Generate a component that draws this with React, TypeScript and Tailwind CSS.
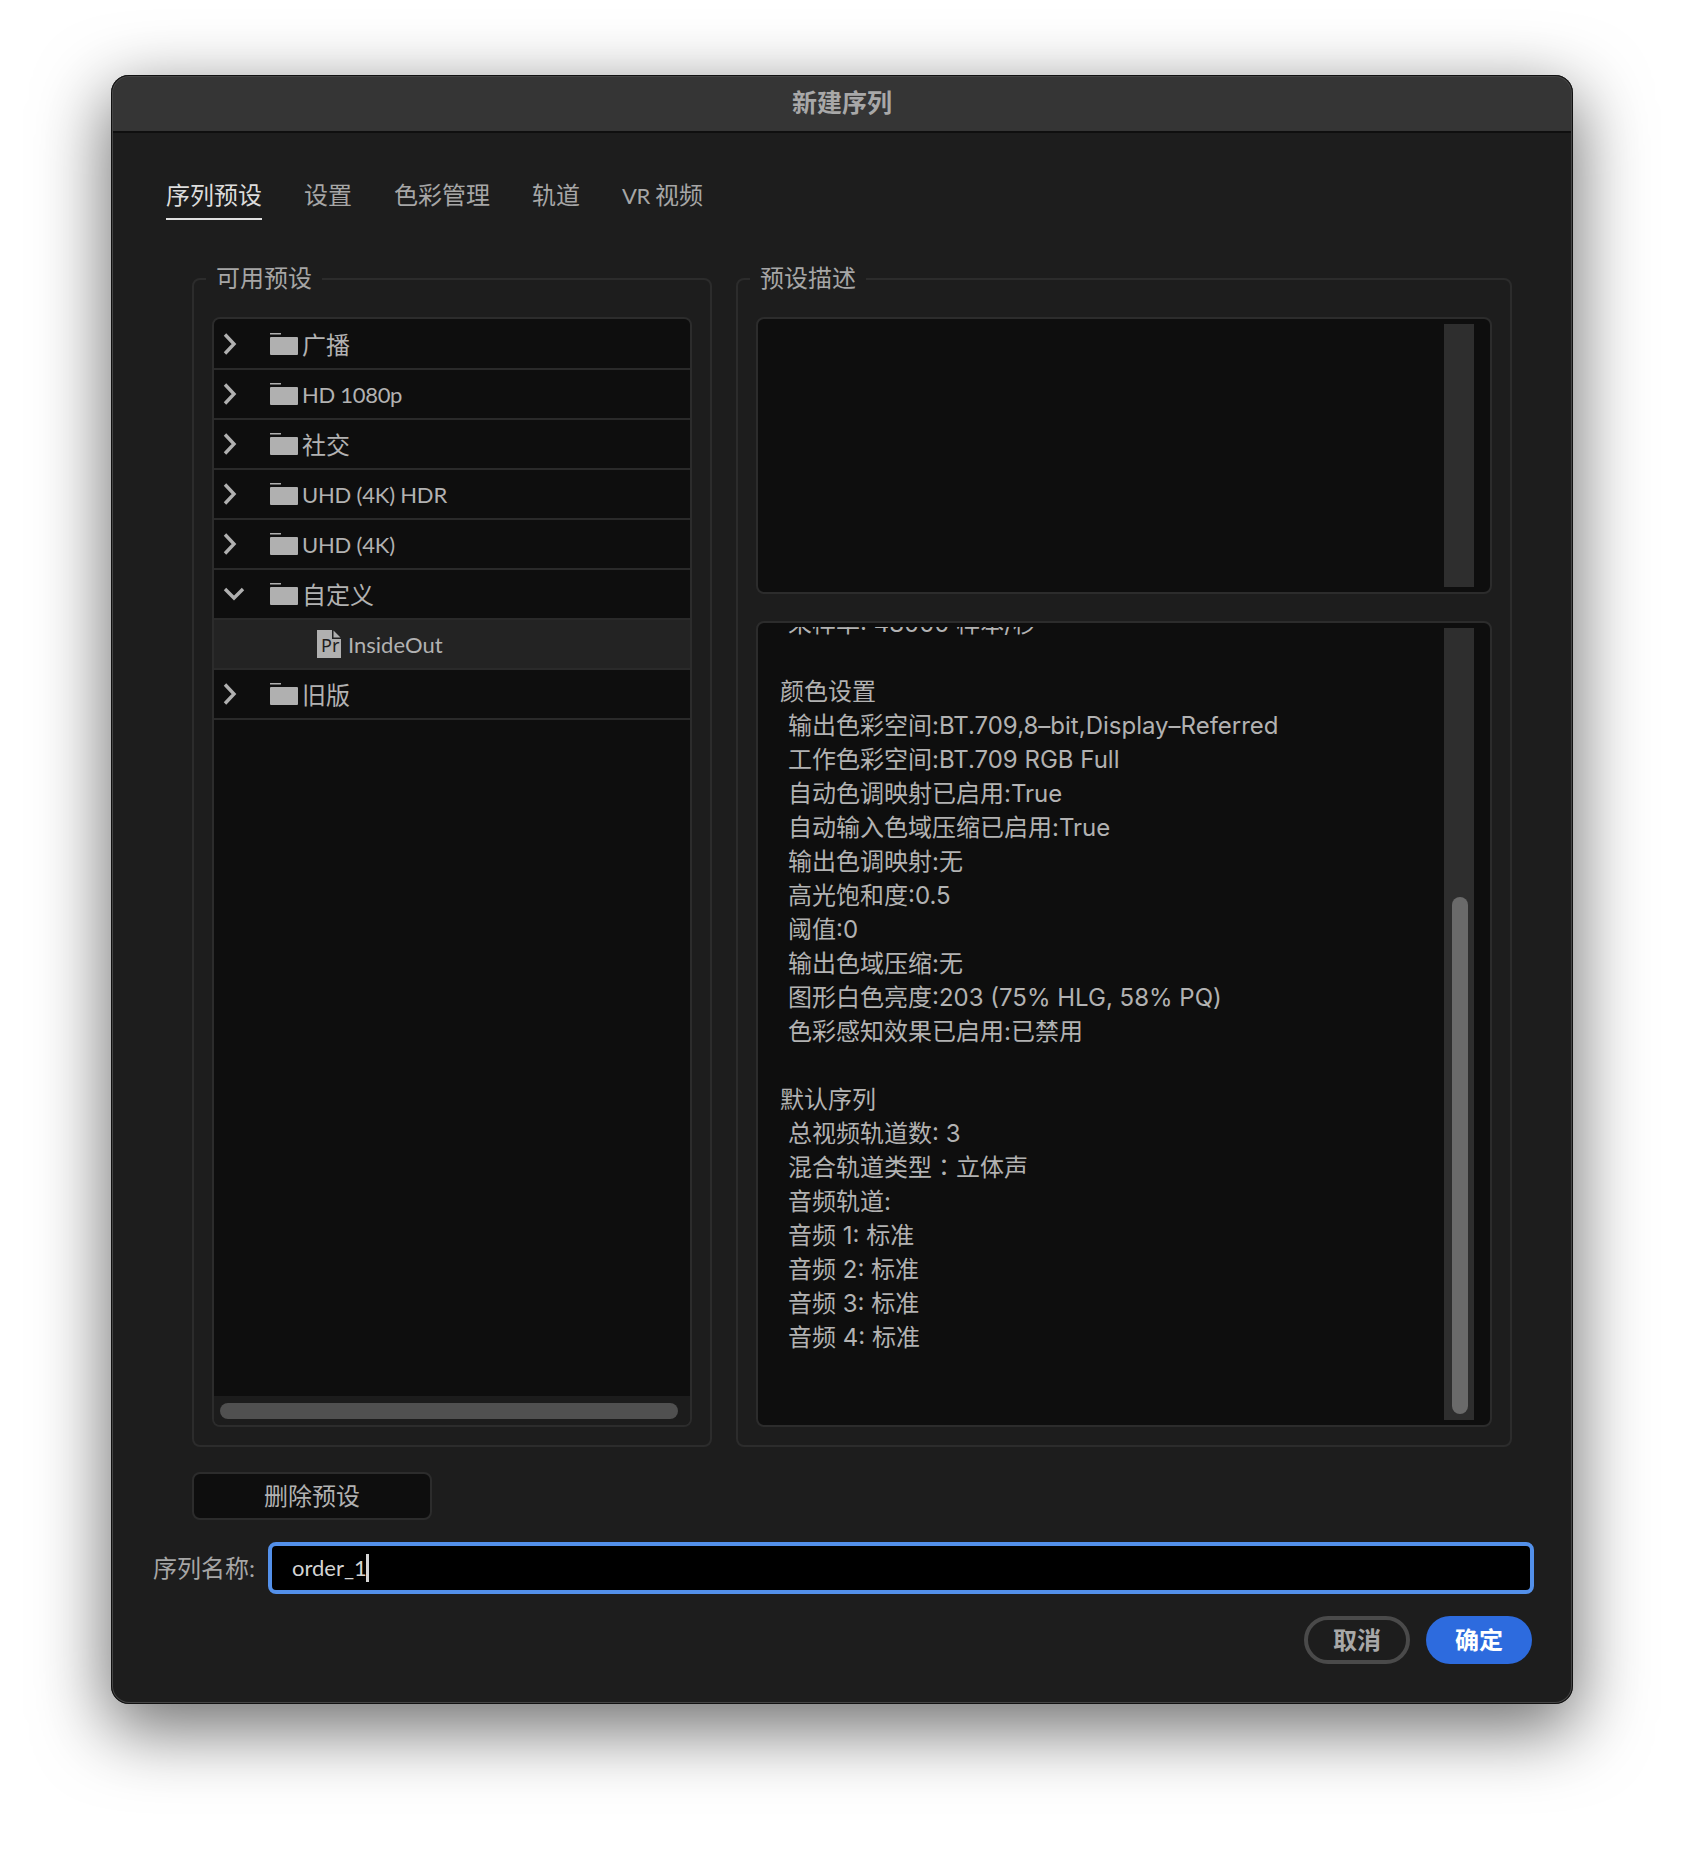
const cjk = "font-['Lato','Noto_Sans_CJK_SC',sans-serif]";
const mixed = "font-['Inter','Noto_Sans_CJK_SC',sans-serif]";

const folders = [
  { name: "广播", size: "text-[24px] mt-[1px]" },
  { name: "HD 1080p", size: "text-[22px] mt-[2px] tracking-[-0.3px]" },
  { name: "社交", size: "text-[24px] mt-[1px]" },
  { name: "UHD (4K) HDR", size: "text-[22px] mt-[2px] tracking-[-0.2px]" },
  { name: "UHD (4K)", size: "text-[22px] mt-[2px] tracking-[-0.2px]" },
  { name: "自定义", size: "text-[24px] mt-[1px]", open: true },
];

const colorLines = [
  "输出色彩空间:BT.709,8–bit,Display–Referred",
  "工作色彩空间:BT.709 RGB Full",
  "自动色调映射已启用:True",
  "自动输入色域压缩已启用:True",
  "输出色调映射:无",
  "高光饱和度:0.5",
  "阈值:0",
  "输出色域压缩:无",
  "图形白色亮度:203 (75% HLG, 58% PQ)",
  "色彩感知效果已启用:已禁用",
];

const audioLines = ["音频轨道:", "音频 1: 标准", "音频 2: 标准", "音频 3: 标准", "音频 4: 标准"];

function Chevron({ open }: { open?: boolean }) {
  if (open) {
    return (
      <svg width="22" height="14" viewBox="0 0 22 14" className="ml-[9px] mr-[25px] shrink-0 -mt-[1px]">
        <path d="M2 2 L11 11 L20 2" fill="none" stroke="#b0b0b0" strokeWidth="3.4" />
      </svg>
    );
  }
  return (
    <svg width="14" height="22" viewBox="0 0 14 22" className="ml-[9px] mr-[33px] shrink-0 -mt-[1px]">
      <path d="M2 1.5 L11 11 L2 20.5" fill="none" stroke="#b0b0b0" strokeWidth="3.4" />
    </svg>
  );
}

function Folder() {
  return (
    <svg width="28" height="22" viewBox="0 0 28 22" className="shrink-0 -mt-[1px]">
      <rect x="0" y="0" width="11" height="1.5" fill="#b0b0b0" />
      <rect x="0" y="4" width="28" height="18" rx="1" fill="#b0b0b0" />
    </svg>
  );
}

function PrIcon() {
  return (
    <svg width="24" height="28" viewBox="0 0 24 28" className="shrink-0 -mt-[1px]">
      <path d="M0 0 H15 V9 H24 V28 H0 Z" fill="#b0b0b0" />
      <path d="M16.5 0.5 L23.5 7.5 H16.5 Z" fill="#b0b0b0" />
      <text x="4" y="22" fontSize="18" fill="#1e1e1e" fontFamily="Noto Sans, sans-serif">Pr</text>
    </svg>
  );
}

function FolderRow({ name, size, open }: { name: string; size?: string; open?: boolean }) {
  return (
    <div className="flex h-[50px] items-center border-b-2 border-[#2a2a2a]">
      <Chevron open={open} />
      <Folder />
      <span className={`ml-[4px] leading-none text-[#b2b2b2] ${size}`}>{name}</span>
    </div>
  );
}

function Group({ title, children }: { title: string; children: React.ReactNode }) {
  return (
    <fieldset className="flex h-[1184px] flex-col rounded-[8px] border-2 border-[#2c2c2c] px-[18px] pb-[18px]">
      <legend className="-ml-[6px] px-[10px] pb-[2px] text-[24px] leading-[30px] text-[#a6a6a6]">{title}</legend>
      {children}
    </fieldset>
  );
}

export default function App() {
  return (
    <div className={`min-h-[1852px] bg-white pl-[111px] pt-[75px] ${cjk}`}>
      <div className="relative flex h-[1629px] w-[1462px] flex-col overflow-hidden rounded-[18px] bg-[#1d1d1d] shadow-[0_22px_70px_4px_rgba(0,0,0,0.56)]">
        <div className="flex h-[58px] shrink-0 items-center justify-center border-b-2 border-b-[#0f0f0f] bg-[#353535]">
          <span className="text-[25px] font-bold text-[#a8a8a8]">新建序列</span>
        </div>

        <div className="flex gap-[42px] pl-[55px] pt-[46px]">
          <div className="h-[41px] border-b-2 border-[#e0e0e0] text-[24px] leading-[32px] text-[#dcdcdc]">序列预设</div>
          <div className="text-[24px] leading-[32px] text-[#a6a6a6]">设置</div>
          <div className="text-[24px] leading-[32px] text-[#a6a6a6]">色彩管理</div>
          <div className="text-[24px] leading-[32px] text-[#a6a6a6]">轨道</div>
          <div className="text-[24px] leading-[32px] text-[#a6a6a6]">
            <span className="text-[22px] tracking-[-0.4px]">VR </span>视频
          </div>
        </div>

        <div className="mt-[43px] flex gap-[24px] pl-[81px]">
          <div className="w-[520px]">
            <Group title="可用预设">
              <div className="mt-[22px] flex h-[1110px] flex-col overflow-hidden rounded-[8px] border-2 border-[#2c2c2c]">
                <div className="flex-1 bg-[#0e0e0e] pt-px">
                  {folders.map((f) => (
                    <FolderRow key={f.name} name={f.name} size={f.size} open={f.open} />
                  ))}
                  <div className="flex h-[50px] items-center border-b-2 border-[#2a2a2a] bg-[#232323] pl-[103px]">
                    <PrIcon />
                    <span className="ml-[7px] mt-[2px] text-[22px] leading-none text-[#b2b2b2]">InsideOut</span>
                  </div>
                  <FolderRow name="旧版" size="text-[24px] mt-[1px]" />
                </div>
                <div className="flex h-[29px] shrink-0 items-center bg-[#1c1c1c] pl-[6px] pr-[12px]">
                  <div className="h-[16px] w-full rounded-full bg-[#505050]" />
                </div>
              </div>
            </Group>
          </div>

          <div className="w-[776px]">
            <Group title="预设描述">
              <div className="mt-[22px] flex h-[277px] overflow-hidden rounded-[8px] border-2 border-[#2c2c2c] bg-[#0e0e0e]">
                <div className="flex-1" />
                <div className="my-[5px] mr-[16px] w-[30px] bg-[#2e2e2e]" />
              </div>
              <div className="mt-[27px] flex h-[806px] overflow-hidden rounded-[8px] border-2 border-[#2c2c2c] bg-[#0e0e0e]">
                <div className="mt-[4px] min-w-0 flex-1 overflow-hidden">
                  <div className={`-mt-[20px] pl-[22px] text-[24px] leading-[34px] text-[#b2b2b2] ${mixed}`}>
                    <div className="pl-[8px]">采样率: 48000 样本/秒</div>
                    <div className="h-[34px]" />
                    <div>颜色设置</div>
                    {colorLines.map((l) => (
                      <div key={l} className="pl-[8px]">{l}</div>
                    ))}
                    <div className="h-[34px]" />
                    <div>默认序列</div>
                    <div className="pl-[8px]">总视频轨道数: 3</div>
                    <div className="h-[34px] pl-[8px]">
                      混合轨道类型<span className="font-['Noto_Sans_CJK_TC',sans-serif] leading-none">：</span>立体声
                    </div>
                    {audioLines.map((l) => (
                      <div key={l} className="pl-[8px]">{l}</div>
                    ))}
                  </div>
                </div>
                <div className="my-[5px] mr-[16px] flex w-[30px] flex-col justify-end bg-[#2e2e2e] pb-[6px] pl-[8px]">
                  <div className="h-[517px] w-[16px] rounded-full bg-[#6a6a6a]" />
                </div>
              </div>
            </Group>
          </div>
        </div>

        <div className="mt-[25px] pl-[81px]">
          <button className="h-[48px] w-[240px] rounded-[8px] border-2 border-[#2c2c2c] bg-[#0e0e0e] text-[24px] leading-none text-[#b2b2b2]">
            删除预设
          </button>
        </div>

        <div className="mt-[22px] flex items-center pl-[42px]">
          <span className="w-[115px] shrink-0 text-[24px] leading-none text-[#a6a6a6]">序列名称:</span>
          <div className="flex h-[52px] w-[1266px] items-center rounded-[8px] border-4 border-[#5390ea] bg-black pl-[20px]">
            <span className="text-[22px] leading-none text-[#d4d4d4]">order_1</span>
            <span className="-ml-[1px] h-[28px] w-[3px] bg-[#d4d4d4]" />
          </div>
        </div>

        <div className="mt-[22px] flex justify-end gap-[16px] pr-[41px]">
          <button className="h-[48px] w-[106px] rounded-full border-4 border-[#4a4a4a] text-[24px] font-bold leading-none text-[#a8a8a8]">
            取消
          </button>
          <button className="h-[48px] w-[106px] rounded-full bg-[#2d6bde] text-[24px] font-bold leading-none text-white">
            确定
          </button>
        </div>

        <div className="pointer-events-none absolute inset-0 rounded-[18px] shadow-[inset_0_0_0_1px_#111111,inset_0_0_0_2px_#454545]" />
      </div>
    </div>
  );
}
